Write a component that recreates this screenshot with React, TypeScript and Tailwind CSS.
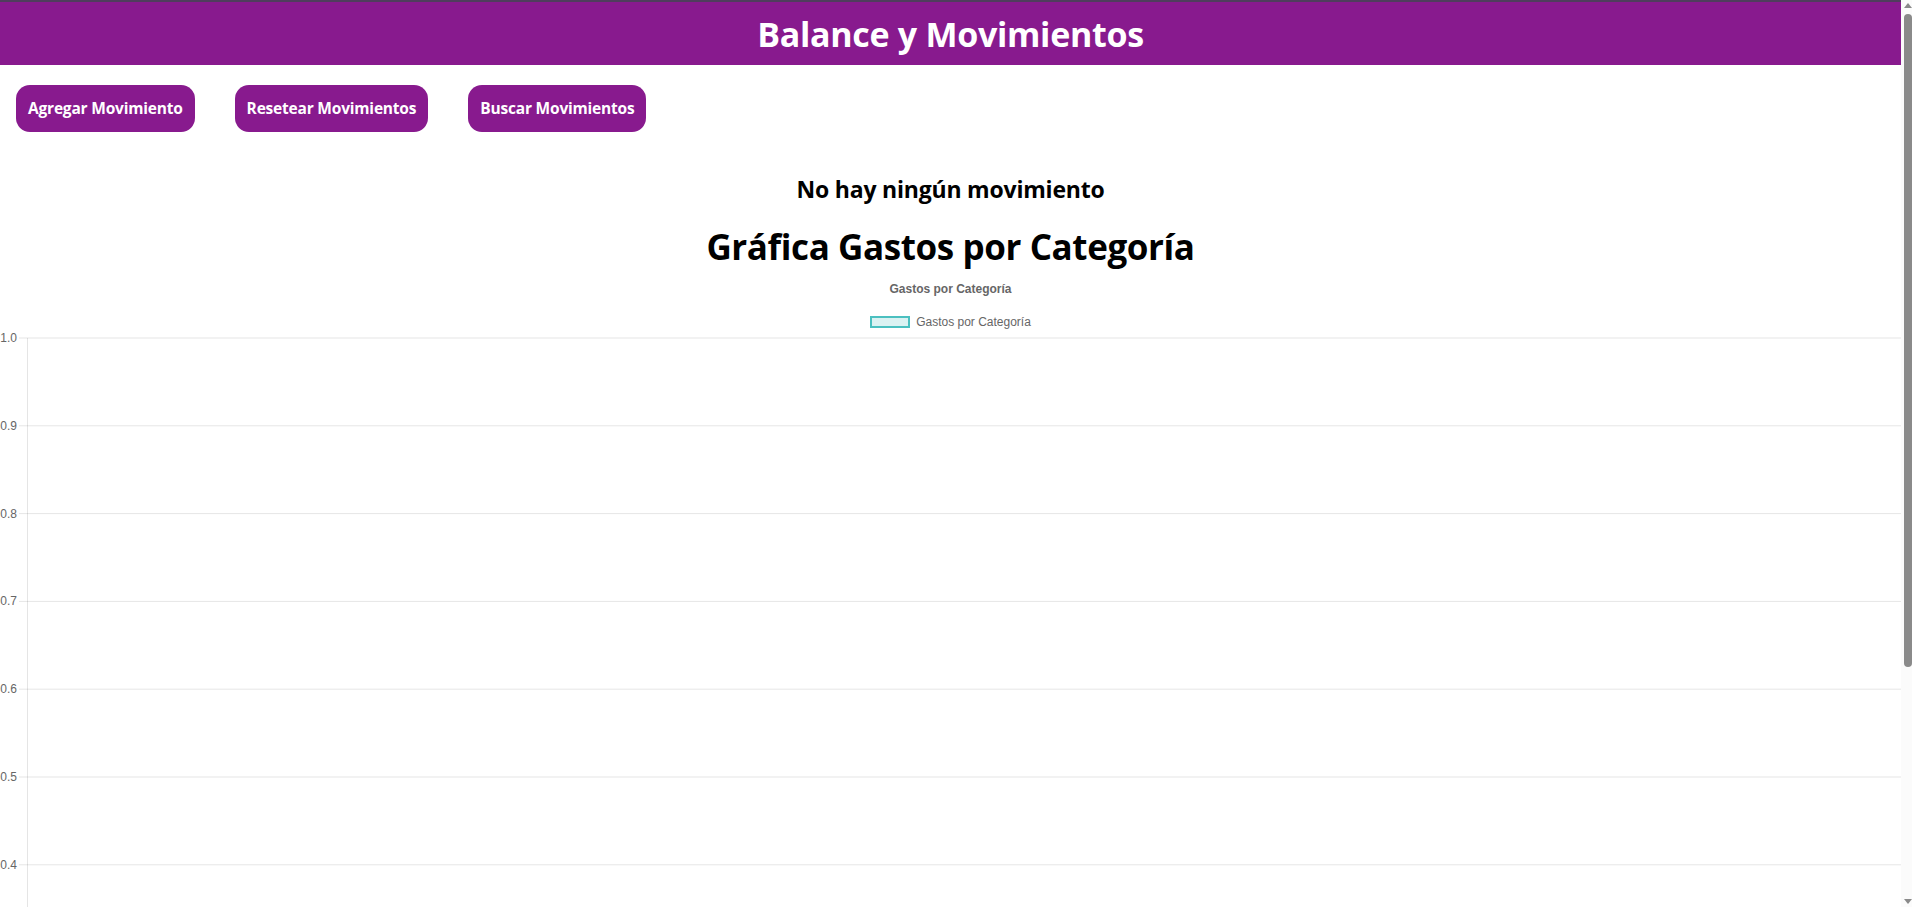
import React from "react"

const ticks = ["1.0", "0.9", "0.8", "0.7", "0.6", "0.5", "0.4"]
const chartFont = "'Liberation Sans', Arial, sans-serif"

function EmptyBarChart() {
  const step = 87.8
  const top = 6
  return (
    <div className="w-full">
      <div className="flex justify-center pt-[16px] text-[12px] font-bold text-[#666]" style={{ fontFamily: chartFont }}>
        Gastos por Categoría
      </div>
      <div className="flex items-center justify-center gap-[6px] pt-[15px] text-[12px] text-[#666]" style={{ fontFamily: chartFont }}>
        <span className="block w-[40px] h-[12px] border-[2px] border-[rgb(75,192,192)] bg-[rgba(75,192,192,0.2)]" />
        <span>Gastos por Categoría</span>
      </div>
      <svg className="block w-full mt-[1px]" height={top + step * 6 + 60}>
        {ticks.map((t, i) => {
          const y = top + i * step
          return (
            <g key={t}>
              <line x1="19" x2="100%" y1={y} y2={y} stroke="rgba(0,0,0,0.1)" strokeWidth="1" />
              <text x="17" y={y + 4} textAnchor="end" fontSize="12" fill="#666" fontFamily={chartFont}>
                {t}
              </text>
            </g>
          )
        })}
        <line x1="27.5" x2="27.5" y1={top} y2={top + step * 6 + 60} stroke="rgba(0,0,0,0.1)" strokeWidth="1" />
      </svg>
    </div>
  )
}

function FakeScrollbar() {
  return (
    <div className="w-[11px] h-full bg-[#fbfbfb] flex flex-col items-end pt-[3px] pb-[3px]">
      <div className="w-0 h-0 border-l-[4px] border-r-[4px] border-b-[5px] border-l-transparent border-r-transparent border-b-[#8a8a8a]" />
      <div className="mt-[6px] w-[8px] h-[653px] bg-[#8a8a8a] rounded-[4px]" />
      <div className="flex-1" />
      <div className="w-0 h-0 border-l-[4px] border-r-[4px] border-t-[5px] border-l-transparent border-r-transparent border-t-[#8a8a8a]" />
    </div>
  )
}

export default function App() {
  const buttons = ["Agregar Movimiento", "Resetear Movimientos", "Buscar Movimientos"]

  return (
    <div className="h-screen flex overflow-hidden bg-white text-black" style={{ fontFamily: "'Open Sans', 'Noto Sans', sans-serif" }}>
      <div className="flex-1 min-w-0 overflow-hidden">
        {/* Header */}
        <header className="h-[65px] bg-[#881a8e] border-t-[2px] border-[#4f3d5c] flex items-center justify-center">
          <h1 className="text-[34px] font-bold text-white leading-none tracking-[-0.3px]">Balance y Movimientos</h1>
        </header>

        {/* Actions */}
        <div className="flex items-center gap-[40px] pl-[16px] pt-[20px]">
          {buttons.map((label) => (
            <button
              key={label}
              className="h-[47px] px-[12px] rounded-[14px] bg-[#881a8e] text-white text-[15.5px] font-bold tracking-[-0.2px]"
            >
              {label}
            </button>
          ))}
        </div>

        <h2 className="mt-[46px] text-center text-[23px] font-bold leading-none tracking-[-0.2px]">No hay ningún movimiento</h2>
        <h1 className="mt-[28px] text-center text-[35px] font-bold leading-none tracking-[-0.4px]">Gráfica Gastos por Categoría</h1>

        <EmptyBarChart />
      </div>
      <FakeScrollbar />
    </div>
  )
}
